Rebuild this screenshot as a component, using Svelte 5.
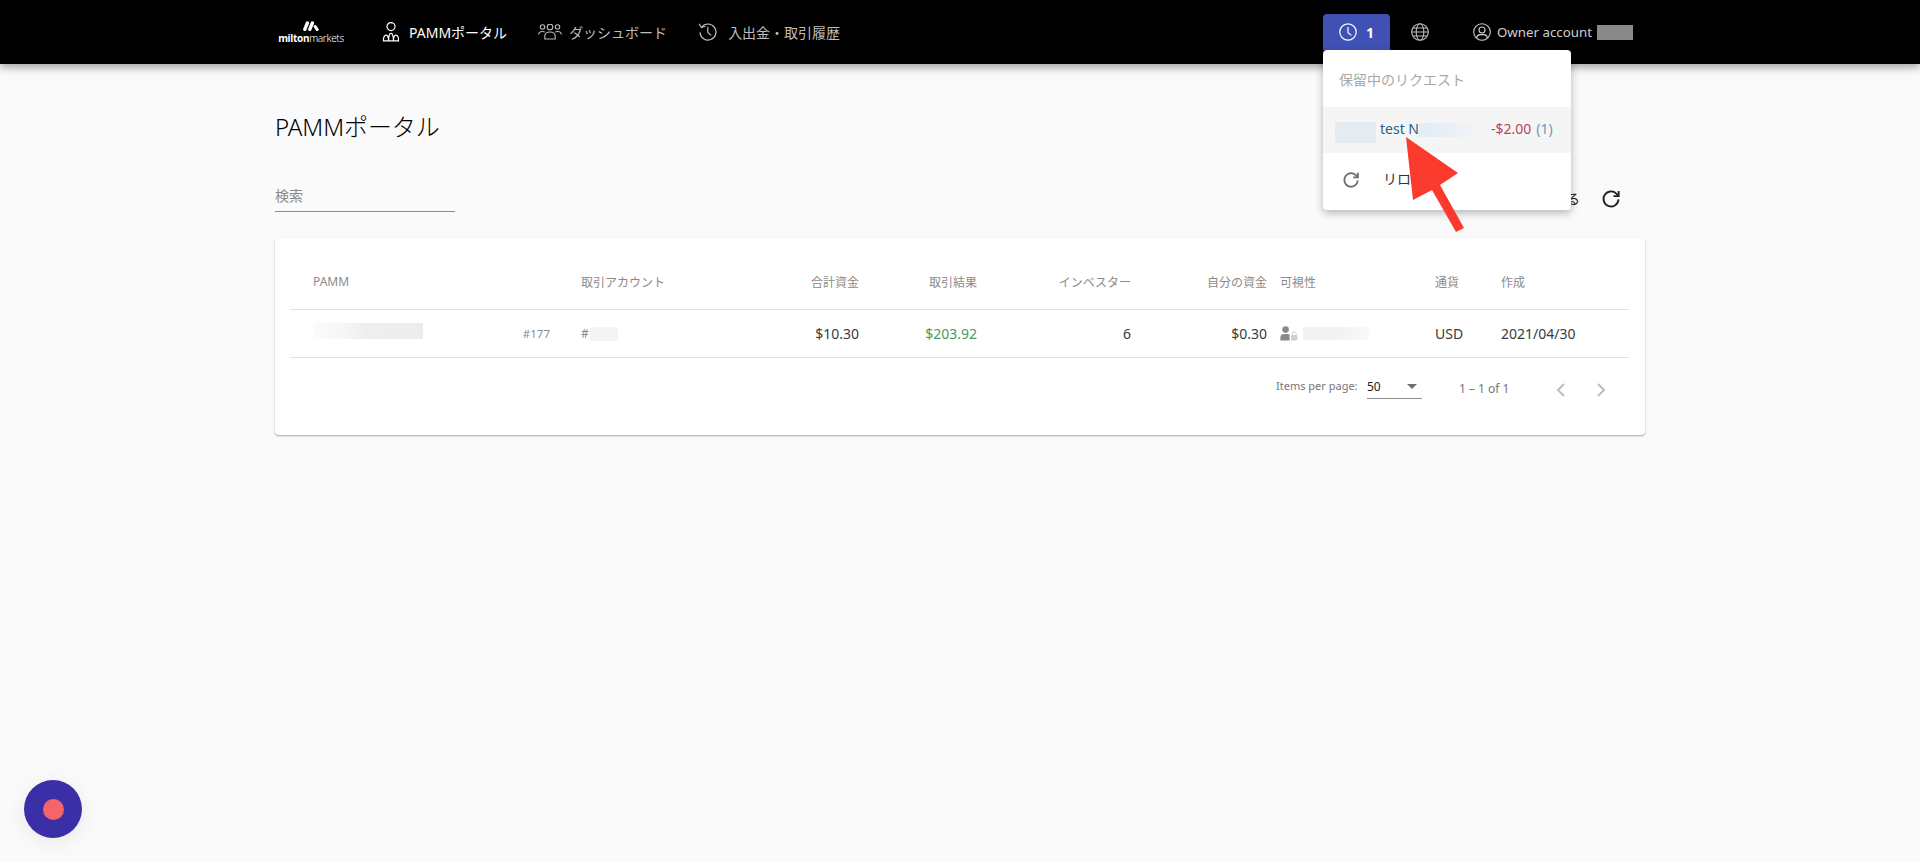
<script>
  const cols = [
    { label: 'PAMM', cls: 'c1 latin' },
    { label: '取引アカウント', cls: 'c2' },
    { label: '合計資金', cls: 'r' },
    { label: '取引結果', cls: 'r' },
    { label: 'インベスター', cls: 'r' },
    { label: '自分の資金', cls: 'r' },
    { label: '可視性', cls: 'c7' },
    { label: '通貨', cls: '' },
    { label: '作成', cls: '' }
  ];
</script>

<div class="page">
  <header class="topbar">
    <div class="bar-inner">
      <div class="logo">
        <svg class="mark" viewBox="0 0 16 10" width="16" height="10" fill="none" stroke="#fff" stroke-linecap="round" aria-hidden="true">
          <path d="M1.8 8.4 L4.4 2" stroke-width="3.4"/>
          <path d="M6.8 8.4 L9.4 2" stroke-width="3.4"/>
          <path d="M12.2 5.6 L14.2 8.6" stroke-width="3"/>
        </svg>
        <div class="logo-text"><b>milton</b>markets</div>
      </div>
      <nav class="nav">
        <a class="nav-item active">
          <svg width="18" height="20" viewBox="0 0 18 20" fill="none" stroke="#fff" stroke-width="1.2" aria-hidden="true">
            <circle cx="9" cy="4.6" r="4"/>
            <path d="M1.5 18.8 Q1.2 13.8 4 13.2 Q6.4 13 6.6 18.8 Z M6.6 18.8 Q6.6 11.4 9 11.4 Q11.4 11.4 11.4 18.8 Z M11.4 18.8 Q11.6 13 14 13.2 Q16.8 13.8 16.5 18.8 Z M1 18.8 H17"/>
          </svg>
          <span>PAMMポータル</span>
        </a>
        <a class="nav-item wide">
          <svg width="24" height="16" viewBox="0 0 24 16" fill="none" stroke="#bdbdbd" stroke-width="1.1" aria-hidden="true">
            <circle cx="4.5" cy="3" r="2.2"/><circle cx="12" cy="3" r="2.8"/><circle cx="19.5" cy="3" r="2.2"/>
            <path d="M0.6 10.5 Q0.8 7.5 4.5 7.5 Q5.8 7.5 6.8 8"/><path d="M23.4 10.5 Q23.2 7.5 19.5 7.5 Q18.2 7.5 17.2 8"/>
            <path d="M6.8 15 V12 Q7 8 12 8 Q17 8 17.2 12 V15 Z"/>
          </svg>
          <span>ダッシュボード</span>
        </a>
        <a class="nav-item">
          <svg width="20" height="20" viewBox="0 0 20 20" fill="none" stroke="#bdbdbd" stroke-width="1.2" aria-hidden="true">
            <path d="M3.6 5.2 A8 8 0 1 1 2 10.4"/><path d="M1 1.8 L3.4 5.6 L7.4 4.2"/><path d="M9.8 5 V10.4 L13.2 13.4"/>
          </svg>
          <span>入出金・取引履歴</span>
        </a>
      </nav>
      <div class="right">
        <div class="pending">
          <button class="pending-btn">
            <svg width="18" height="18" viewBox="0 0 18 18" fill="none" stroke="#fff" stroke-width="1.2" aria-hidden="true">
              <circle cx="9" cy="9" r="8.2"/><path d="M9 4 V9.6 L12.4 12.4"/>
            </svg>
            <b>1</b>
          </button>
          <div class="popup">
            <div class="popup-title">保留中のリクエスト</div>
            <div class="popup-row">
              <span class="blur b1"></span>
              <span class="req-name">test N</span>
              <span class="blur b2"></span>
              <span class="amount">-$2.00</span>
              <span class="count">(1)</span>
            </div>
            <div class="popup-reload">
              <svg class="grey-refresh" width="18" height="18" viewBox="0 0 24 24" fill="none" stroke="#707070" stroke-width="2.4" aria-hidden="true">
                <path d="M21 12.5 A9 9 0 1 1 18.4 5.6 L21 8.2"/><path d="M21.2 2.4 V8.6 H15"/>
              </svg>
              <span>リロード</span>
            </div>
          </div>
        </div>
        <svg class="globe" width="18" height="18" viewBox="0 0 18 18" fill="none" stroke="#bdbdbd" stroke-width="1.1" aria-hidden="true">
          <circle cx="9" cy="9" r="8.3"/><ellipse cx="9" cy="9" rx="3.8" ry="8.3"/><path d="M0.7 9 H17.3 M1.8 5 H16.2 M1.8 13 H16.2"/>
        </svg>
        <div class="account">
          <svg width="18" height="18" viewBox="0 0 18 18" fill="none" stroke="#d0d0d0" stroke-width="1.1" aria-hidden="true">
            <circle cx="9" cy="9" r="8.3"/><circle cx="9" cy="7" r="3"/><path d="M3.6 15 Q4 11.8 7 11.6 H11 Q14 11.8 14.4 15"/>
          </svg>
          <span>Owner account</span>
          <span class="acc-box"></span>
        </div>
      </div>
    </div>
  </header>

  <main class="main">
    <h1>PAMMポータル</h1>
    <div class="tools">
      <div class="search">検索</div>
      <div class="show">
        <span>すべて表示する</span>
        <svg width="20" height="20" viewBox="0 0 24 24" fill="none" stroke="#222" stroke-width="2.2" aria-hidden="true">
          <path d="M21 12.5 A9 9 0 1 1 18.4 5.6 L21 8.2"/><path d="M21.2 2.4 V8.6 H15"/>
        </svg>
      </div>
    </div>

    <section class="card">
      <div class="grid head">
        {#each cols as c}
          <div class={c.cls}>{c.label}</div>
        {/each}
      </div>
      <div class="grid row">
        <div class="c1 pamm"><span class="blur name"></span><span class="id">#177</span></div>
        <div class="c2 acct"><span>#</span><span class="blur acct-b"></span></div>
        <div class="r">$10.30</div>
        <div class="r green">$203.92</div>
        <div class="r">6</div>
        <div class="r">$0.30</div>
        <div class="c7 vis">
          <svg width="18" height="15" viewBox="0 0 18 15" aria-hidden="true">
            <circle cx="5.6" cy="3.6" r="3.3" fill="#8a8a8a"/>
            <path d="M0.4 14.5 V11 Q0.6 8 4 8 H7.6 Q9 8 9.6 8.6 V14.5 Z" fill="#8a8a8a"/>
            <rect x="11" y="9" width="6.4" height="5.5" rx="0.8" fill="#cfcfcf"/>
            <path d="M12.4 9 V7.6 A1.8 1.8 0 0 1 16 7.6 V9" fill="none" stroke="#cfcfcf" stroke-width="1"/>
          </svg>
          <span class="blur vis-b"></span>
        </div>
        <div>USD</div>
        <div>2021/04/30</div>
      </div>
      <div class="pager">
        <span class="ipp">Items per page:</span>
        <div class="select"><span>50</span><i class="caret"></i></div>
        <span class="range">1 – 1 of 1</span>
        <svg class="chev" width="12" height="16" viewBox="0 0 12 16" fill="none" stroke="#bdbdbd" stroke-width="2" aria-hidden="true"><path d="M9 2 L3 8 L9 14"/></svg>
        <svg class="chev next" width="12" height="16" viewBox="0 0 12 16" fill="none" stroke="#bdbdbd" stroke-width="2" aria-hidden="true"><path d="M3 2 L9 8 L3 14"/></svg>
      </div>
    </section>
  </main>

  <svg class="arrow" width="80" height="110" viewBox="0 0 80 110" aria-hidden="true">
    <path d="M2 2 L54 38 L36 50 L60 93 L52 97 L28 55 L9 65 Z" fill="#fb3a2e"/>
  </svg>

  <div class="fab"><i></i></div>
</div>

<style>
  :global(body) {
    margin: 0;
    background: #fafafa;
    font-family: "Noto Sans", "Noto Sans CJK JP", sans-serif;
    color: #222;
  }
  .page {
    position: relative;
    height: 862px;
    overflow: hidden;
  }
  .topbar {
    position: relative;
    z-index: 3;
    height: 64px;
    background: #000;
    box-shadow: 0 3px 9px rgba(0, 0, 0, 0.38);
  }
  .bar-inner {
    width: 1370px;
    height: 64px;
    margin: 0 auto;
    display: flex;
    align-items: center;
  }
  .logo {
    width: 64px;
    margin-left: 4px;
    display: flex;
    flex-direction: column;
    align-items: center;
    color: #fff;
  }
  .mark { margin-bottom: 1px; }
  .logo-text {
    font-size: 10px;
    line-height: 12px;
    font-weight: 300;
    letter-spacing: -0.3px;
    white-space: nowrap;
  }
  .logo-text b { font-weight: 700; }
  .nav {
    display: flex;
    align-items: center;
    margin-left: 39px;
    gap: 31px;
  }
  .nav-item {
    display: flex;
    align-items: center;
    gap: 10px;
    font-size: 14px;
    color: #bdbdbd;
    white-space: nowrap;
  }
  .nav-item.wide { gap: 7px; }
  .nav-item.active { color: #fff; gap: 9px; }
  .right {
    margin-left: auto;
    margin-right: 12px;
    display: flex;
    align-items: center;
    height: 64px;
  }
  .pending {
    position: relative;
    height: 36px;
  }
  .pending-btn {
    width: 67px;
    height: 36px;
    border: 0;
    padding: 0 0 0 16px;
    background: #3f51b5;
    border-radius: 4px 4px 0 0;
    display: flex;
    align-items: center;
    gap: 9px;
    color: #fff;
    font: inherit;
    font-size: 14px;
  }
  .popup {
    position: absolute;
    left: 0;
    top: 36px;
    width: 248px;
    height: 160px;
    background: #fff;
    border-radius: 4px;
    box-shadow: 0 3px 8px rgba(0, 0, 0, 0.28);
    font-size: 14px;
  }
  .popup-title {
    height: 57px;
    padding-left: 16px;
    display: flex;
    align-items: center;
    color: #a8a8a8;
    white-space: nowrap;
  }
  .popup-row {
    height: 46px;
    background: #f5f5f5;
    display: flex;
    align-items: center;
    padding-left: 12px;
    white-space: nowrap;
  }
  .blur { display: block; }
  .b1 { width: 41px; height: 21px; margin-top: 4px; background: #e6ebef; }
  .req-name { margin-left: 4px; margin-bottom: 3px; color: #2b618c; }
  .b2 {
    width: 54px;
    height: 14px;
    background: linear-gradient(90deg, #e3edf5, #e8eff6 50%, #f1f4f7);
  }
  .amount { margin-left: 18px; margin-bottom: 3px; color: #b4465a; }
  .count { margin-left: 5px; margin-bottom: 3px; color: #6f97bb; }
  .popup-reload {
    height: 57px;
    box-sizing: border-box;
    padding: 0 0 7px 19px;
    display: flex;
    align-items: center;
    gap: 23px;
    color: #333;
  }
  .grey-refresh { margin-top: 3px; }
  .globe { margin-left: 21px; }
  .account {
    margin-left: 44px;
    display: flex;
    align-items: center;
    gap: 6px;
    font-size: 13.3px;
    color: #d0d0d0;
    white-space: nowrap;
  }
  .acc-box { width: 36px; height: 15px; background: #8a8a8a; margin-left: -1px; }

  .main {
    width: 1370px;
    margin: 0 auto;
    padding-top: 47px;
  }
  h1 {
    margin: 0;
    font-size: 24px;
    line-height: 32px;
    font-weight: 300;
    letter-spacing: -0.1px;
    color: #000;
  }
  .tools {
    margin-top: 40px;
    display: flex;
    justify-content: space-between;
    padding-right: 24px;
  }
  .search {
    width: 180px;
    height: 28px;
    border-bottom: 1px solid #8e8e8e;
    font-size: 14px;
    line-height: 26px;
    color: #8a8a8a;
  }
  .show {
    display: flex;
    align-items: center;
    gap: 21px;
    font-size: 14px;
    height: 29px;
  }
  .show svg { margin-top: 2px; }
  .card {
    margin-top: 26px;
    height: 197px;
    box-sizing: border-box;
    padding: 16px 16px 0 15px;
    background: #fff;
    border-radius: 4px;
    box-shadow: 0 1px 2px rgba(0, 0, 0, 0.35);
  }
  .grid {
    display: grid;
    grid-template-columns: 291px 169px 109px 118px 154px 136px 168px 66px 128px;
    align-items: center;
    border-bottom: 1px solid #e2e2e2;
    box-sizing: border-box;
  }
  .head {
    height: 56px;
    font-size: 12px;
    color: #8a8a8a;
  }
  .row {
    height: 48px;
    font-size: 14px;
    color: #3a3a3a;
  }
  .r { text-align: right; }
  .c1 { padding-left: 23px; }
  .c7 { padding-left: 13px; }
  .pamm {
    display: flex;
    align-items: center;
    justify-content: space-between;
    padding-right: 31px;
  }
  .name {
    width: 110px;
    height: 16px;
    margin-top: -6px;
    background: linear-gradient(90deg, #fbfbfb, #f7f7f7 25%, #eeeeee 50%, #ededed);
  }
  .id { font-size: 11.5px; color: #8a8a8a; }
  .acct {
    display: flex;
    align-items: center;
    gap: 1px;
    font-size: 12px;
    color: #8a8a8a;
  }
  .acct-b { width: 28px; height: 14px; background: #f4f4f4; }
  .green { color: #4a9a5a; }
  .vis { display: flex; align-items: center; gap: 5px; }
  .vis-b { width: 66px; height: 13px; background: linear-gradient(90deg, #f3f3f3, #f2f2f2 50%, #fafafa); }
  .pager {
    display: flex;
    align-items: flex-start;
    padding-top: 16px;
    padding-left: 986px;
    font-size: 12px;
    color: #777;
    white-space: nowrap;
  }
  .ipp { width: 91px; line-height: 24px; font-size: 11px; }
  .select {
    width: 55px;
    height: 25px;
    box-sizing: border-box;
    border-bottom: 1px solid #8e8e8e;
    display: flex;
    justify-content: space-between;
    align-items: center;
    color: #222;
    padding-right: 5px;
  }
  .caret {
    width: 0;
    height: 0;
    border-left: 5px solid transparent;
    border-right: 5px solid transparent;
    border-top: 5px solid #6f6f6f;
  }
  .range { margin-left: 37px; width: 96px; line-height: 30px; }
  .chev { margin-top: 8px; }
  .next { margin-left: 28px; }

  .arrow {
    position: absolute;
    left: 1404px;
    top: 135px;
    z-index: 4;
  }
  .fab {
    position: absolute;
    left: 24px;
    top: 780px;
    width: 58px;
    height: 58px;
    border-radius: 50%;
    background: #3a2fa6;
    box-shadow: 0 4px 20px rgba(0, 0, 0, 0.08);
    display: flex;
    align-items: center;
    justify-content: center;
  }
  .fab i {
    width: 21px;
    height: 21px;
    border-radius: 50%;
    background: #f5646a;
  }
</style>
